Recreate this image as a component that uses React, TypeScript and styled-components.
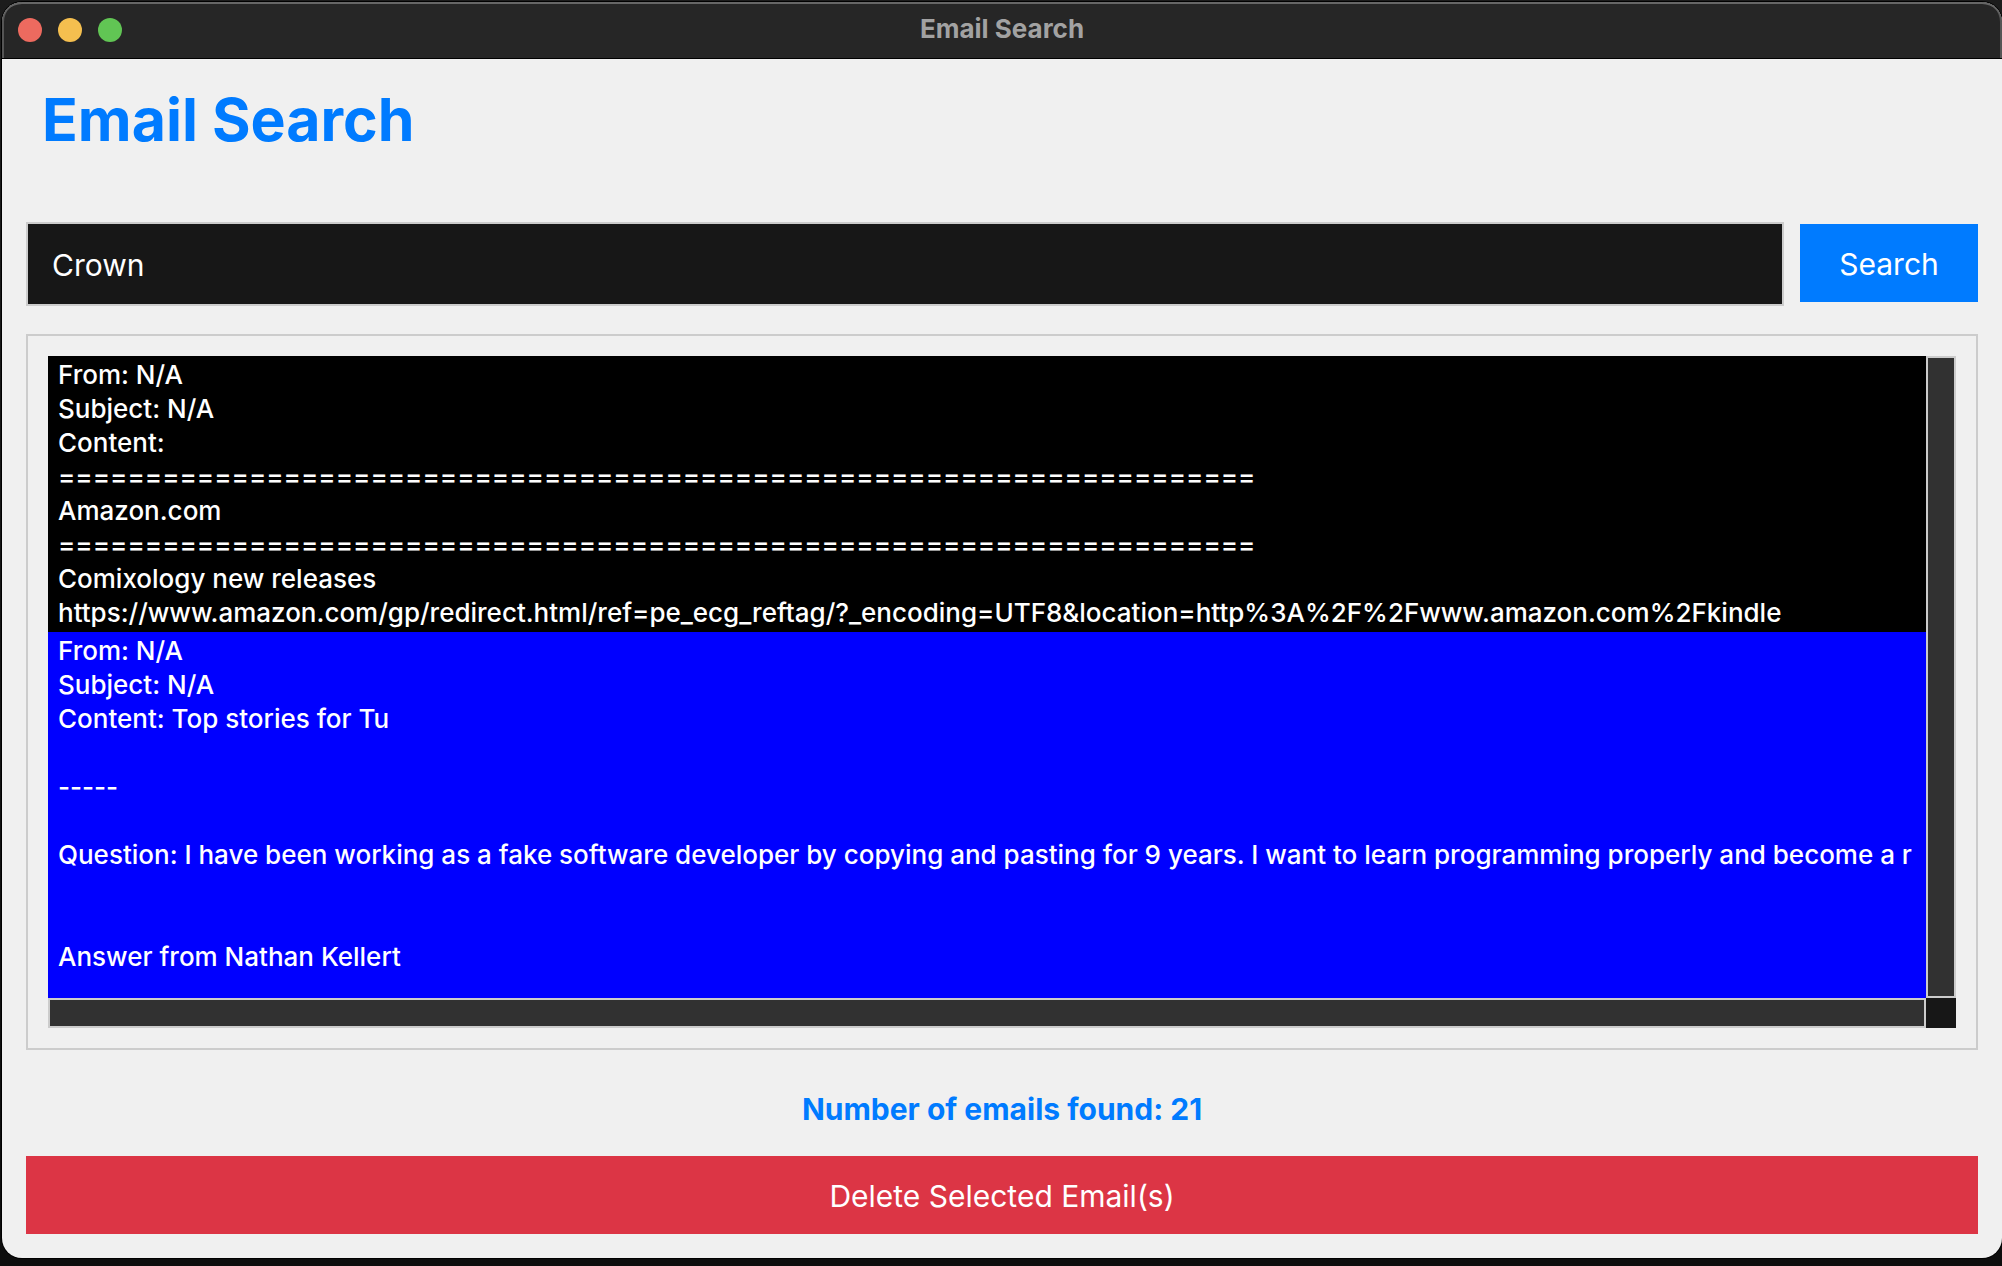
import React, { useState } from "react";
import styled, { createGlobalStyle } from "styled-components";

const GlobalStyle = createGlobalStyle`
  *, *::before, *::after { box-sizing: border-box; }
  body {
    margin: 0;
    background: #101010;
    font-family: Inter, "Liberation Sans", sans-serif;
  }
`;

const Desktop = styled.div`
  display: flex;
  min-height: 100vh;
  padding: 2px 0 8px 2px;
  background: linear-gradient(#1c1c1c, #0d0d0d);
`;

const Window = styled.div`
  flex: 1;
  min-width: 0;
  display: flex;
  flex-direction: column;
  border-radius: 20px;
  overflow: hidden;
  background: #f0f0f0;
  box-shadow: 0 0 0 1px #000;
`;

const TitleBar = styled.header`
  display: grid;
  grid-template-columns: 1fr auto 1fr;
  align-items: center;
  height: 57px;
  padding: 0 16px;
  background: #262626;
  border-bottom: 1px solid #000;
  border-radius: 20px 20px 0 0;
  box-shadow: inset 0 2px 0 #666, inset 2px 0 0 #555, inset -2px 0 0 #555;
`;

const Lights = styled.div`
  display: flex;
  gap: 16px;
`;

const Light = styled.button<{ $color: string }>`
  width: 24px;
  height: 24px;
  padding: 0;
  border: 0;
  border-radius: 50%;
  background: ${(p) => p.$color};
`;

const WindowTitle = styled.span`
  padding-bottom: 2px;
  font-size: 26px;
  line-height: 32px;
  font-weight: 700;
  color: #a2a2a2;
`;

const Content = styled.main`
  flex: 1;
  display: flex;
  flex-direction: column;
  padding: 24px;
`;

const Heading = styled.h1`
  margin: 0;
  padding: 0 16px;
  font-size: 59px;
  line-height: 73px;
  font-weight: 700;
  color: #007bff;
`;

const SearchRow = styled.form`
  display: flex;
  align-items: center;
  gap: 16px;
  margin-top: 66px;
`;

const SearchInput = styled.input`
  flex: 1;
  min-width: 0;
  height: 84px;
  padding: 2px 24px 0;
  border: 2px solid #cccccc;
  border-radius: 0;
  outline: 0;
  background: #171717;
  color: #fff;
  font: 400 30px/40px Inter, "Liberation Sans", sans-serif;
`;

const ActionButton = styled.button<{ $color: string }>`
  height: 78px;
  min-width: 178px;
  padding: 2px 38px 0;
  border: 0;
  background: ${(p) => p.$color};
  color: #fff;
  font: 400 30px/40px Inter, "Liberation Sans", sans-serif;

  ${SearchRow} & {
    margin-bottom: 2px;
  }
`;

const ResultsFrame = styled.section`
  flex: 1;
  display: grid;
  grid-template-columns: minmax(0, 1fr) 30px;
  grid-template-rows: minmax(0, 1fr) 30px;
  margin-top: 28px;
  padding: 20px;
  border: 2px solid #cccccc;
`;

const EmailList = styled.ul`
  display: flex;
  flex-direction: column;
  margin: 0;
  padding: 0;
  list-style: none;
  overflow: hidden;
  background: #000;
`;

const EmailItem = styled.li<{ $selected: boolean; $last: boolean }>`
  flex: ${(p) => (p.$last ? "1 0 auto" : "0 0 auto")};
  padding: 2px 10px;
  background: ${(p) => (p.$selected ? "#0000ff" : "#000")};
  color: #fff;
  font-size: 26px;
  font-weight: 500;
  line-height: 34px;
  white-space: pre;
`;

const Scrollbar = styled.div`
  border: 2px solid #cccccc;
  background: #313131;
`;

const ScrollCorner = styled.div`
  background: #171717;
`;

const Count = styled.p`
  margin: 38px 0 26px;
  font-size: 30px;
  line-height: 42px;
  font-weight: 700;
  text-align: center;
  color: #007bff;
`;

const RULE = "=".repeat(69);

const EMAILS = [
  `From: N/A
Subject: N/A
Content: 
${RULE}
Amazon.com
${RULE}
Comixology new releases
https://www.amazon.com/gp/redirect.html/ref=pe_ecg_reftag/?_encoding=UTF8&location=http%3A%2F%2Fwww.amazon.com%2Fkindle`,
  `From: N/A
Subject: N/A
Content: Top stories for Tu

-----

Question: I have been working as a fake software developer by copying and pasting for 9 years. I want to learn programming properly and become a r


Answer from Nathan Kellert`,
];

export default function App() {
  const [query, setQuery] = useState("Crown");
  const [selected, setSelected] = useState(1);

  return (
    <>
      <GlobalStyle />
      <Desktop>
        <Window>
          <TitleBar>
            <Lights>
              <Light type="button" aria-label="Close" $color="#ed6a5f" />
              <Light type="button" aria-label="Minimize" $color="#f5bf4f" />
              <Light type="button" aria-label="Zoom" $color="#61c554" />
            </Lights>
            <WindowTitle>Email Search</WindowTitle>
          </TitleBar>
          <Content>
            <Heading>Email Search</Heading>
            <SearchRow onSubmit={(e) => e.preventDefault()}>
              <SearchInput
                type="text"
                aria-label="Search emails"
                value={query}
                onChange={(e) => setQuery(e.target.value)}
              />
              <ActionButton type="submit" $color="#007bff">
                Search
              </ActionButton>
            </SearchRow>
            <ResultsFrame>
              <EmailList role="listbox" aria-label="Emails found">
                {EMAILS.map((text, i) => (
                  <EmailItem
                    key={i}
                    role="option"
                    aria-selected={i === selected}
                    $selected={i === selected}
                    $last={i === EMAILS.length - 1}
                    onClick={() => setSelected(i)}
                  >
                    {text}
                  </EmailItem>
                ))}
              </EmailList>
              <Scrollbar />
              <Scrollbar />
              <ScrollCorner />
            </ResultsFrame>
            <Count>Number of emails found: 21</Count>
            <ActionButton type="button" $color="#dc3545">
              Delete Selected Email(s)
            </ActionButton>
          </Content>
        </Window>
      </Desktop>
    </>
  );
}
